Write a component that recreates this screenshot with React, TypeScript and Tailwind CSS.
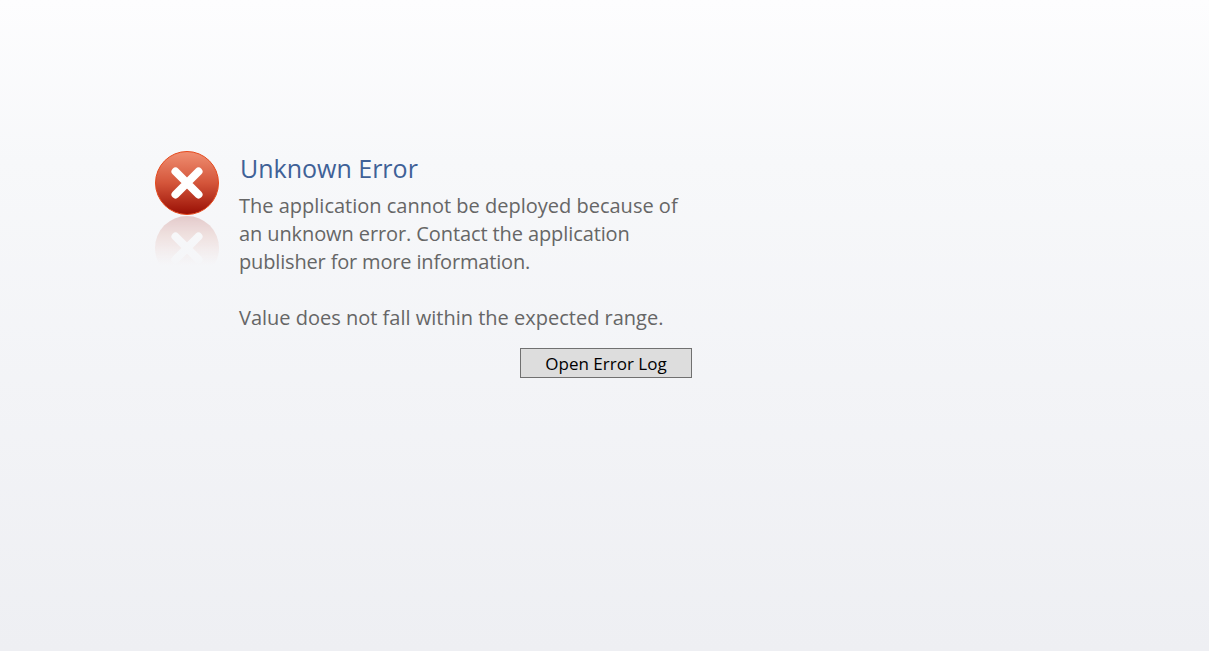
const ErrorIcon = () => {
  return (
    <svg width="68" height="120" viewBox="0 0 68 120" className="block">
      <defs>
        <linearGradient id="ball" x1="0" y1="0" x2="0" y2="1">
          <stop offset="0" stopColor="#f08f72" />
          <stop offset="0.5" stopColor="#d4553a" />
          <stop offset="1" stopColor="#990f04" />
        </linearGradient>
        <linearGradient id="fade" x1="0" y1="64" x2="0" y2="114" gradientUnits="userSpaceOnUse">
          <stop offset="0" stopColor="#fff" stopOpacity="0.2" />
          <stop offset="1" stopColor="#fff" stopOpacity="0" />
        </linearGradient>
        <mask id="reflect" maskUnits="userSpaceOnUse" x="0" y="60" width="68" height="60">
          <rect x="0" y="60" width="68" height="60" fill="url(#fade)" />
        </mask>
      </defs>
      <g mask="url(#reflect)">
        <g transform="translate(0 129) scale(1 -1)">
          <circle cx="34" cy="32" r="32" fill="url(#ball)" />
          <path d="M22.5 20.5 L45.5 43.5 M45.5 20.5 L22.5 43.5" stroke="#fff" strokeWidth="8" strokeLinecap="round" />
        </g>
      </g>
      <circle cx="34" cy="32" r="31.5" fill="url(#ball)" stroke="#e5491c" strokeWidth="1" />
      <path d="M22.5 20.5 L45.5 43.5 M45.5 20.5 L22.5 43.5" stroke="#fff" strokeWidth="8" strokeLinecap="round" />
    </svg>
  );
};

const App = () => {
  return (
    <main className="h-[651px] w-[1209px] overflow-hidden bg-gradient-to-b from-[#fdfdfe] via-[#f7f8fa] via-[25%] to-[#eeeff3] pl-[153px] pt-[151px] font-['Open_Sans','Noto_Sans',sans-serif]">
      <div className="flex w-[539px] gap-[18px]">
        <ErrorIcon />
        <div className="flex-1">
          <h1 className="pl-px text-[25px] leading-[35px] text-[#3f6197]">Unknown Error</h1>
          <p className="mt-[6px] text-[20px] leading-[28px] text-[#666666]">
            The application cannot be deployed because of
            <br />
            <span className="tracking-[-0.1px]">an unknown error. Contact the application</span>
            <br />
            <span className="tracking-[-0.16px]">publisher for more information.</span>
          </p>
          <p className="mt-[28px] text-[20px] leading-[28px] text-[#666666]">
            Value does not fall within the expected range.
          </p>
          <div className="mt-[16px] flex justify-end">
            <button className="h-[30px] w-[172px] border border-[#707070] bg-[#dddddd] pt-[2px] text-[17px] leading-[26px] text-black">
              Open Error Log
            </button>
          </div>
        </div>
      </div>
    </main>
  );
};

export default App;
